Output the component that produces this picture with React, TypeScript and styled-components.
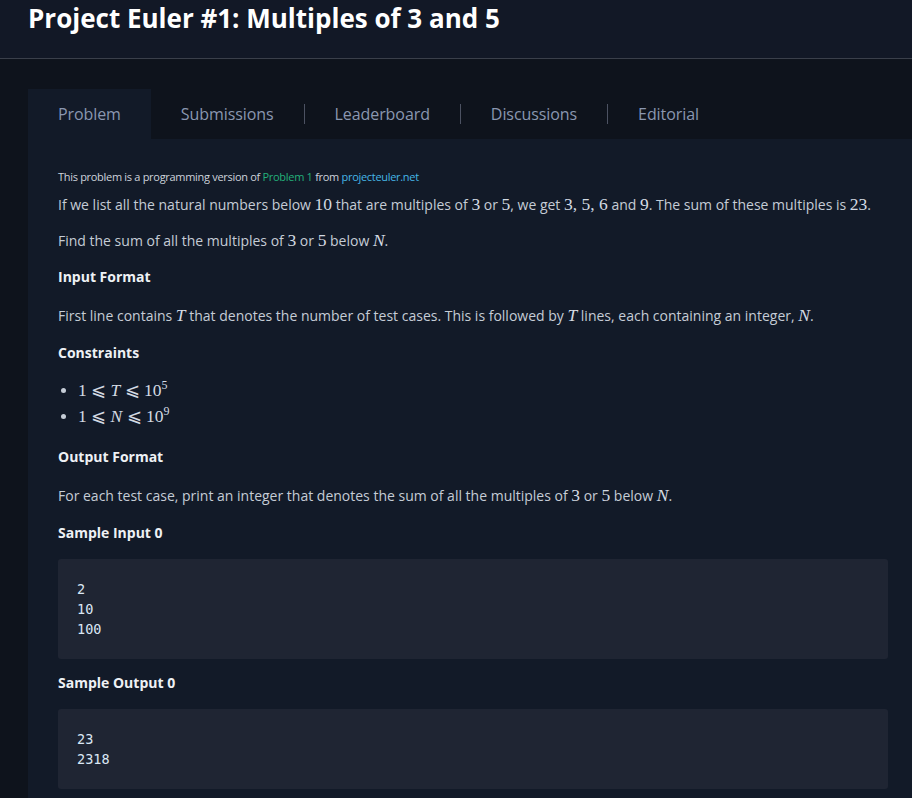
import React from "react";
import styled, { createGlobalStyle } from "styled-components";

const GlobalStyle = createGlobalStyle`
  html, body {
    margin: 0;
    padding: 0;
    background: #0e131c;
    font-family: "Open Sans", "Noto Sans", sans-serif;
  }
`;

const Header = styled.header`
  background: #121826;
  border-bottom: 1px solid #3a3f4a;
  height: 59px;
  padding: 0 28px;
  box-sizing: border-box;
`;

const Title = styled.h1`
  margin: 0;
  padding-top: 1px;
  font-size: 26px;
  line-height: 34px;
  font-weight: 700;
  color: #ffffff;
`;

const Main = styled.div`
  padding: 30px 0 0 28px;
`;

const TabBar = styled.nav`
  display: flex;
  align-items: center;
  height: 50px;
`;

const Tab = styled.div<{ $active?: boolean }>`
  display: flex;
  align-items: center;
  height: 100%;
  padding: 0 30px;
  font-size: 16px;
  letter-spacing: -0.08px;
  color: #8a97b0;
  background: ${(p) => (p.$active ? "#121a28" : "transparent")};
  cursor: pointer;
`;

const Divider = styled.span`
  width: 1px;
  height: 20px;
  background: #4c5262;
`;

const Panel = styled.section`
  background: #121a28;
  padding: 30px 24px 20px 30px;
  color: #c5ccd6;
  font-size: 14px;
  line-height: 24px;
`;

const Intro = styled.div`
  font-size: 11px;
  line-height: 16px;
  letter-spacing: -0.3px;
  color: #cdd3dc;
  margin-bottom: 8px;
`;

const Link = styled.a<{ $tone: "green" | "blue" }>`
  color: ${(p) => (p.$tone === "green" ? "#23b07a" : "#45b6e6")};
  text-decoration: none;
`;

const Para = styled.p<{ $gap?: number }>`
  margin: 0 0 ${(p) => p.$gap ?? 12}px;
`;

const Heading = styled.h3<{ $tight?: boolean }>`
  margin: 0 0 ${(p) => (p.$tight ? 14 : 15)}px;
  font-size: 14px;
  line-height: 24px;
  font-weight: 700;
  color: #eef1f5;
`;

const List = styled.ul`
  margin: -2px 0 15px;
  padding-left: 20px;
  line-height: 26px;
`;

const M = styled.span<{ $italic?: boolean }>`
  font-family: "Liberation Serif", "DejaVu Serif", serif;
  font-size: 17.5px;
  line-height: 1;
  font-style: ${(p) => (p.$italic ? "italic" : "normal")};
  color: #d4dae3;
`;

const Sup = styled.sup`
  font-family: "Liberation Serif", "DejaVu Serif", serif;
  font-size: 12px;
  line-height: 0;
  vertical-align: 7px;
  color: #d4dae3;
`;

const Code = styled.pre`
  margin: 0 0 12px;
  padding: 20px 19px;
  background: #1f2533;
  border-radius: 3px;
  font-family: "DejaVu Sans Mono", "Liberation Mono", monospace;
  font-size: 13.5px;
  line-height: 20px;
  color: #dbe7f5;
`;

const tabs = ["Problem", "Submissions", "Leaderboard", "Discussions", "Editorial"];

export default function App() {
  return (
    <>
      <GlobalStyle />
      <Header>
        <Title>Project Euler #1: Multiples of 3 and 5</Title>
      </Header>
      <Main>
        <TabBar>
          {tabs.map((t, i) => (
            <React.Fragment key={t}>
              {i > 1 && <Divider />}
              <Tab $active={i === 0}>{t}</Tab>
            </React.Fragment>
          ))}
        </TabBar>
        <Panel>
          <Intro>
            This problem is a programming version of{" "}
            <Link $tone="green">Problem 1</Link> from{" "}
            <Link $tone="blue">projecteuler.net</Link>
          </Intro>
          <Para>
            If we list all the natural numbers below <M>10</M> that are multiples of <M>3</M> or{" "}
            <M>5</M>, we get <M>3, 5, 6</M> and <M>9</M>. The sum of these multiples is <M>23</M>.
          </Para>
          <Para>
            Find the sum of all the multiples of <M>3</M> or <M>5</M> below <M $italic>N</M>.
          </Para>
          <Heading>Input Format</Heading>
          <Para $gap={13}>
            First line contains <M $italic>T</M> that denotes the number of test cases. This is followed by{" "}
            <M $italic>T</M> lines, each containing an integer, <M $italic>N</M>.
          </Para>
          <Heading>Constraints</Heading>
          <List>
            <li>
              <M>1 ⩽ </M>
              <M $italic>T</M>
              <M> ⩽ 10</M>
              <Sup>5</Sup>
            </li>
            <li>
              <M>1 ⩽ </M>
              <M $italic>N</M>
              <M> ⩽ 10</M>
              <Sup>9</Sup>
            </li>
          </List>
          <Heading>Output Format</Heading>
          <Para $gap={13}>
            For each test case, print an integer that denotes the sum of all the multiples of <M>3</M> or{" "}
            <M>5</M> below <M $italic>N</M>.
          </Para>
          <Heading $tight>Sample Input 0</Heading>
          <Code>{"2\n10\n100"}</Code>
          <Heading $tight>Sample Output 0</Heading>
          <Code>{"23\n2318"}</Code>
        </Panel>
      </Main>
    </>
  );
}
